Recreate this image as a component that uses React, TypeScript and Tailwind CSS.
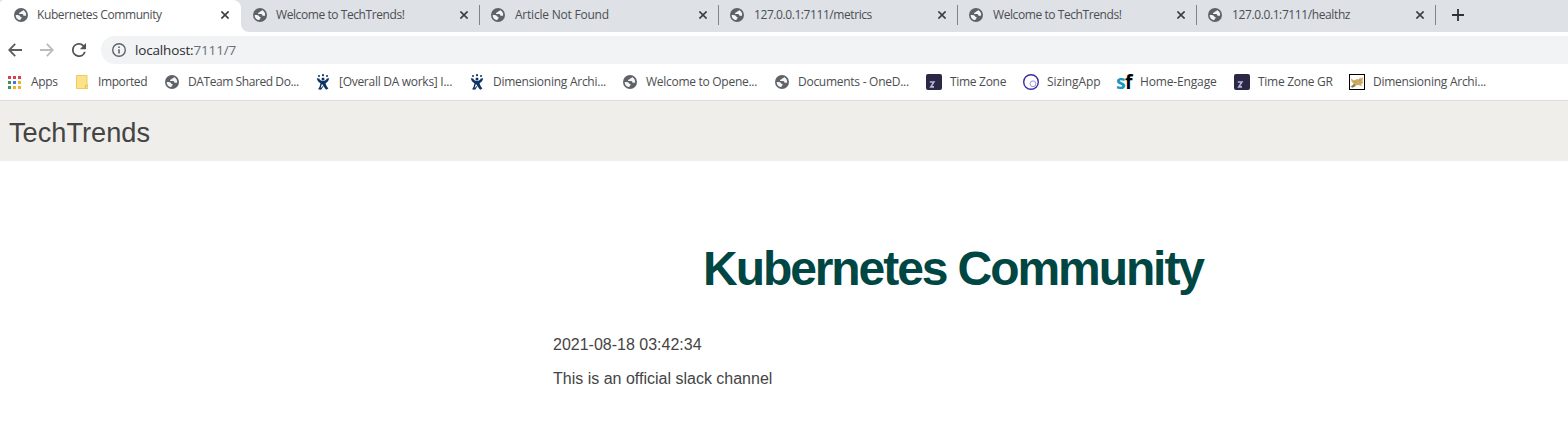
import type { ReactNode } from 'react';

function Globe() {
  return (
    <svg viewBox="0 0 14 14" className="size-3.5 shrink-0">
      <circle cx="7" cy="7" r="7" fill="#5f6368" />
      <path
        d="M9 2C8.8 3 8.2 3.4 7.1 3.5C6.9 4.2 6.3 4.6 5.3 4.8C4.9 5.4 5 6 5.6 6.1H8.1C9 6.3 9.4 6.9 9.4 7.8H10.4C11.1 7.8 11.7 8 12.1 7.6C12.5 5.2 11.2 2.9 9 2Z"
        fill="#f4f5f6"
      />
      <path d="M1.7 7C2.8 6.8 5 6.9 5.8 7.7C6.2 8.3 6.2 8.9 7.2 9.1C8 9.4 7.7 10.6 6.6 10.9V12.1C3.8 12.1 1.6 9.9 1.7 7Z" fill="#f4f5f6" />
    </svg>
  );
}

function Close() {
  return (
    <svg viewBox="0 0 8 8" className="size-2 shrink-0" stroke="#3c4043" strokeWidth="1.6">
      <path d="M.4 .4L7.6 7.6M7.6 .4L.4 7.6" />
    </svg>
  );
}

function AppsGrid() {
  const colors = ['#d93f4c', '#d93f4c', '#d93f4c', '#3b9558', '#3d7de0', '#edb32c', '#3b9558', '#edb32c', '#edb32c'];
  return (
    <svg viewBox="0 0 13 13" className="mr-px size-[13px] shrink-0">
      {colors.map((c, i) => (
        <rect key={i} x={(i % 3) * 5} y={Math.floor(i / 3) * 5} width="3" height="3" fill={c} />
      ))}
    </svg>
  );
}

function Folder() {
  return (
    <svg viewBox="0 0 12 14" className="h-3.5 w-3">
      <path d="M.5 .5H11V9.5H11.6V13.5H.5Z" fill="#fde28a" stroke="#eccb63" />
      <path d="M9.5 13V10.5H11" fill="none" stroke="#e6c04e" />
    </svg>
  );
}

function Jira() {
  return (
    <svg viewBox="0 0 14 16" className="h-4 w-3.5" fill="#0d3363">
      <circle cx="3" cy="2" r="1" />
      <circle cx="7" cy="1.2" r="1.1" />
      <circle cx="11" cy="2" r="1" />
      <circle cx="7" cy="4.9" r="1.5" />
      <path d="M.8 4.2L3.2 4.6C3.7 6.2 5 7.1 7 7.1S10.3 6.2 10.8 4.6L13.2 4.2C12.8 6.4 11.6 8.2 9.6 9.2C10 11.2 11 13 12.4 14.4L10.2 15.8C9 14.6 8.2 13.4 7.6 12L5.2 15.8L2 15.2C3.4 13.5 4.2 11.3 4.4 9.2C2.4 8.2 1.2 6.4 .8 4.2Z" />
      <path d="M5.9 9.9L7.3 11.4L4.6 14.2Z" fill="#fff" />
    </svg>
  );
}

function Zone() {
  return (
    <svg viewBox="0 0 16 16" className="size-4">
      <rect width="16" height="16" rx="2" fill="#2a2845" />
      <path d="M3.8 8H7.9L4.8 12.9H8" fill="none" stroke="#b9b5dc" strokeWidth="1.6" />
    </svg>
  );
}

function Sizing() {
  return (
    <svg viewBox="0 0 16 16" className="size-4" fill="none">
      <circle cx="8" cy="8" r="7.3" stroke="#3a2ba8" strokeWidth="1.4" />
      <circle cx="10" cy="9.8" r="2.9" stroke="#9b98d6" strokeWidth="1" />
    </svg>
  );
}

function SuccessFactors() {
  return (
    <span className="flex h-4 w-4 items-end font-['Open_Sans',sans-serif] text-[19.5px] leading-[16px] font-bold tracking-[-0.6px]">
      <span className="text-[#1797c0]">s</span>
      <span className="text-black">f</span>
    </span>
  );
}

function Cat() {
  return (
    <svg viewBox="0 0 16 16" className="size-4">
      <rect x=".5" y=".5" width="15" height="15" fill="#fff" stroke="#000" />
      <path d="M2 4.5L5 6.5L8 5L10 5.5L11 3.5L12 4.5L14 3L13.5 7L14 9L12 10.5L13.5 12.5L9.5 11L6 11.5L2.5 13L4.5 9.5L2.5 7.5Z" fill="#cdac60" />
      <path d="M2 12.5L5.5 10.5L6.5 12L3 13.5ZM5 7L7 8.5M10.5 5L11 7" fill="#8b7a55" stroke="#8b7a55" strokeWidth=".5" />
    </svg>
  );
}

const tabs = [
  { title: 'Welcome to TechTrends!', fit: 'tracking-[-0.42px]' },
  { title: 'Article Not Found', fit: 'tracking-[-0.22px]' },
  { title: '127.0.0.1:7111/metrics', fit: 'tracking-[-0.42px]' },
  { title: 'Welcome to TechTrends!', fit: 'tracking-[-0.42px]' },
  { title: '127.0.0.1:7111/healthz', fit: 'tracking-[-0.39px]' },
];

const bookmarks: { label: string; icon: ReactNode; width: string; fit: string }[] = [
  { label: 'Apps', icon: <AppsGrid />, width: 'w-[67px]', fit: 'tracking-[-0.3px]' },
  { label: 'Imported', icon: <Folder />, width: 'w-[90px]', fit: 'tracking-[-0.4px]' },
  { label: 'DATeam Shared Do...', icon: <Globe />, width: 'w-[151px]', fit: 'tracking-[-0.42px]' },
  { label: '[Overall DA works] I...', icon: <Jira />, width: 'w-[154px]', fit: 'tracking-[-0.28px]' },
  { label: 'Dimensioning Archi...', icon: <Jira />, width: 'w-[153px]', fit: 'tracking-[-0.26px]' },
  { label: 'Welcome to Opene...', icon: <Globe />, width: 'w-[152px]', fit: 'tracking-[-0.28px]' },
  { label: 'Documents - OneD...', icon: <Globe />, width: 'w-[152px]', fit: 'tracking-[-0.27px]' },
  { label: 'Time Zone', icon: <Zone />, width: 'w-[97px]', fit: 'tracking-[-0.3px]' },
  { label: 'SizingApp', icon: <Sizing />, width: 'w-[93px]', fit: 'tracking-[-0.1px]' },
  { label: 'Home-Engage', icon: <SuccessFactors />, width: 'w-[118px]', fit: 'tracking-[-0.15px]' },
  { label: 'Time Zone GR', icon: <Zone />, width: 'w-[115px]', fit: 'tracking-[-0.28px]' },
  { label: 'Dimensioning Archi...', icon: <Cat />, width: 'w-[150px]', fit: 'tracking-[-0.26px]' },
];

function TabStrip() {
  return (
    <div className="flex h-8 bg-[#dee1e6] text-[#4b4f53]">
      <div className="h-8 w-1 bg-[#dee1e6]">
        <div className="h-8 w-1 rounded-tl-lg bg-white" />
      </div>
      <div className="flex h-8 w-[237px] items-center rounded-tr-lg bg-white pr-3 pb-[2px] pl-[10px]">
        <Globe />
        <span className="ml-[9px] flex-1 tracking-[-0.4px] whitespace-nowrap">Kubernetes Community</span>
        <Close />
      </div>
      <div className="bg-white">
        <div className="h-8 w-2 rounded-bl-lg bg-[#dee1e6]" />
      </div>
      {tabs.map((t, i) => (
        <div key={i} className={`flex h-8 items-center pb-[2px] ${i === 0 ? 'w-[231px] pl-1' : 'w-[239px] pl-[11px]'}`}>
          <Globe />
          <span className={`flex-1 whitespace-nowrap ${i === 0 ? 'ml-[9px]' : 'ml-[10px]'} ${t.fit}`}>{t.title}</span>
          <Close />
          <span className="ml-[11px] h-5 w-px bg-[#808387]" />
        </div>
      ))}
      <svg viewBox="0 0 12 12" className="mt-[9px] ml-4 size-3" stroke="#2f3337" strokeWidth="1.8">
        <path d="M6 0V12M0 6H12" />
      </svg>
    </div>
  );
}

function Toolbar() {
  return (
    <div className="flex h-9 items-center pl-2">
      <svg viewBox="0 0 14 14" className="size-3.5" fill="none" stroke="#5a5e62" strokeWidth="1.8">
        <path d="M14 7H1.5M7.2 .8L1.2 7L7.2 13.2" />
      </svg>
      <svg viewBox="0 0 14 14" className="ml-[18px] size-3.5" fill="none" stroke="#babcbe" strokeWidth="1.8">
        <path d="M0 7H12.5M6.8 .8L12.8 7L6.8 13.2" />
      </svg>
      <svg viewBox="4 4 16 16" className="ml-[18px] size-3.5" fill="#505458">
        <path d="M17.65 6.35A7.96 7.96 0 0 0 12 4a8 8 0 1 0 7.73 10h-2.08A6 6 0 1 1 12 6c1.66 0 3.14.69 4.22 1.78L13 11h7V4l-2.35 2.35z" />
      </svg>
      <div className="ml-[15px] flex h-7 flex-1 items-center rounded-l-full bg-[#f1f3f4] pl-[11px]">
        <svg viewBox="0 0 14 14" className="size-3.5" fill="none" stroke="#5f6368" strokeWidth="1.4">
          <circle cx="7" cy="7" r="6.3" />
          <path d="M7 6.2V10.5M7 3.5V5" strokeWidth="1.6" />
        </svg>
        <span className="ml-[9px] text-[13.5px] tracking-[-0.16px] text-[#2b2d30]">
          localhost:<span className="text-[#6b6f73]">7111/7</span>
        </span>
      </div>
    </div>
  );
}

function Bookmarks() {
  return (
    <div className="flex h-[33px] items-center border-b border-[#d9dadb] pb-1 pl-[7px] text-[#4b4e51]">
      {bookmarks.map((b, i) => (
        <div key={i} className={`flex shrink-0 items-center gap-2 ${b.width}`}>
          <span className="flex size-4 shrink-0 items-center justify-center">{b.icon}</span>
          <span className={`whitespace-nowrap ${b.fit}`}>{b.label}</span>
        </div>
      ))}
    </div>
  );
}

export default function App() {
  return (
    <div className="h-[437px] overflow-hidden bg-white font-['Open_Sans','Noto_Sans',sans-serif] text-xs">
      <TabStrip />
      <Toolbar />
      <Bookmarks />
      <div className="font-['Liberation_Sans',Arial,sans-serif] text-[#444]">
        <header className="flex h-[60px] items-center bg-[#efeeea] pt-1 pl-[9px] text-[27.2px]">TechTrends</header>
        <main className="ml-[553px] w-[800px] pt-[78px] text-base">
          <h1 className="text-center text-5xl leading-[60px] font-bold tracking-[-2.08px] text-[#004643]">Kubernetes Community</h1>
          <p className="mt-[34px] leading-6">2021-08-18 03:42:34</p>
          <p className="mt-[10px] leading-6">This is an official slack channel</p>
        </main>
      </div>
    </div>
  );
}
